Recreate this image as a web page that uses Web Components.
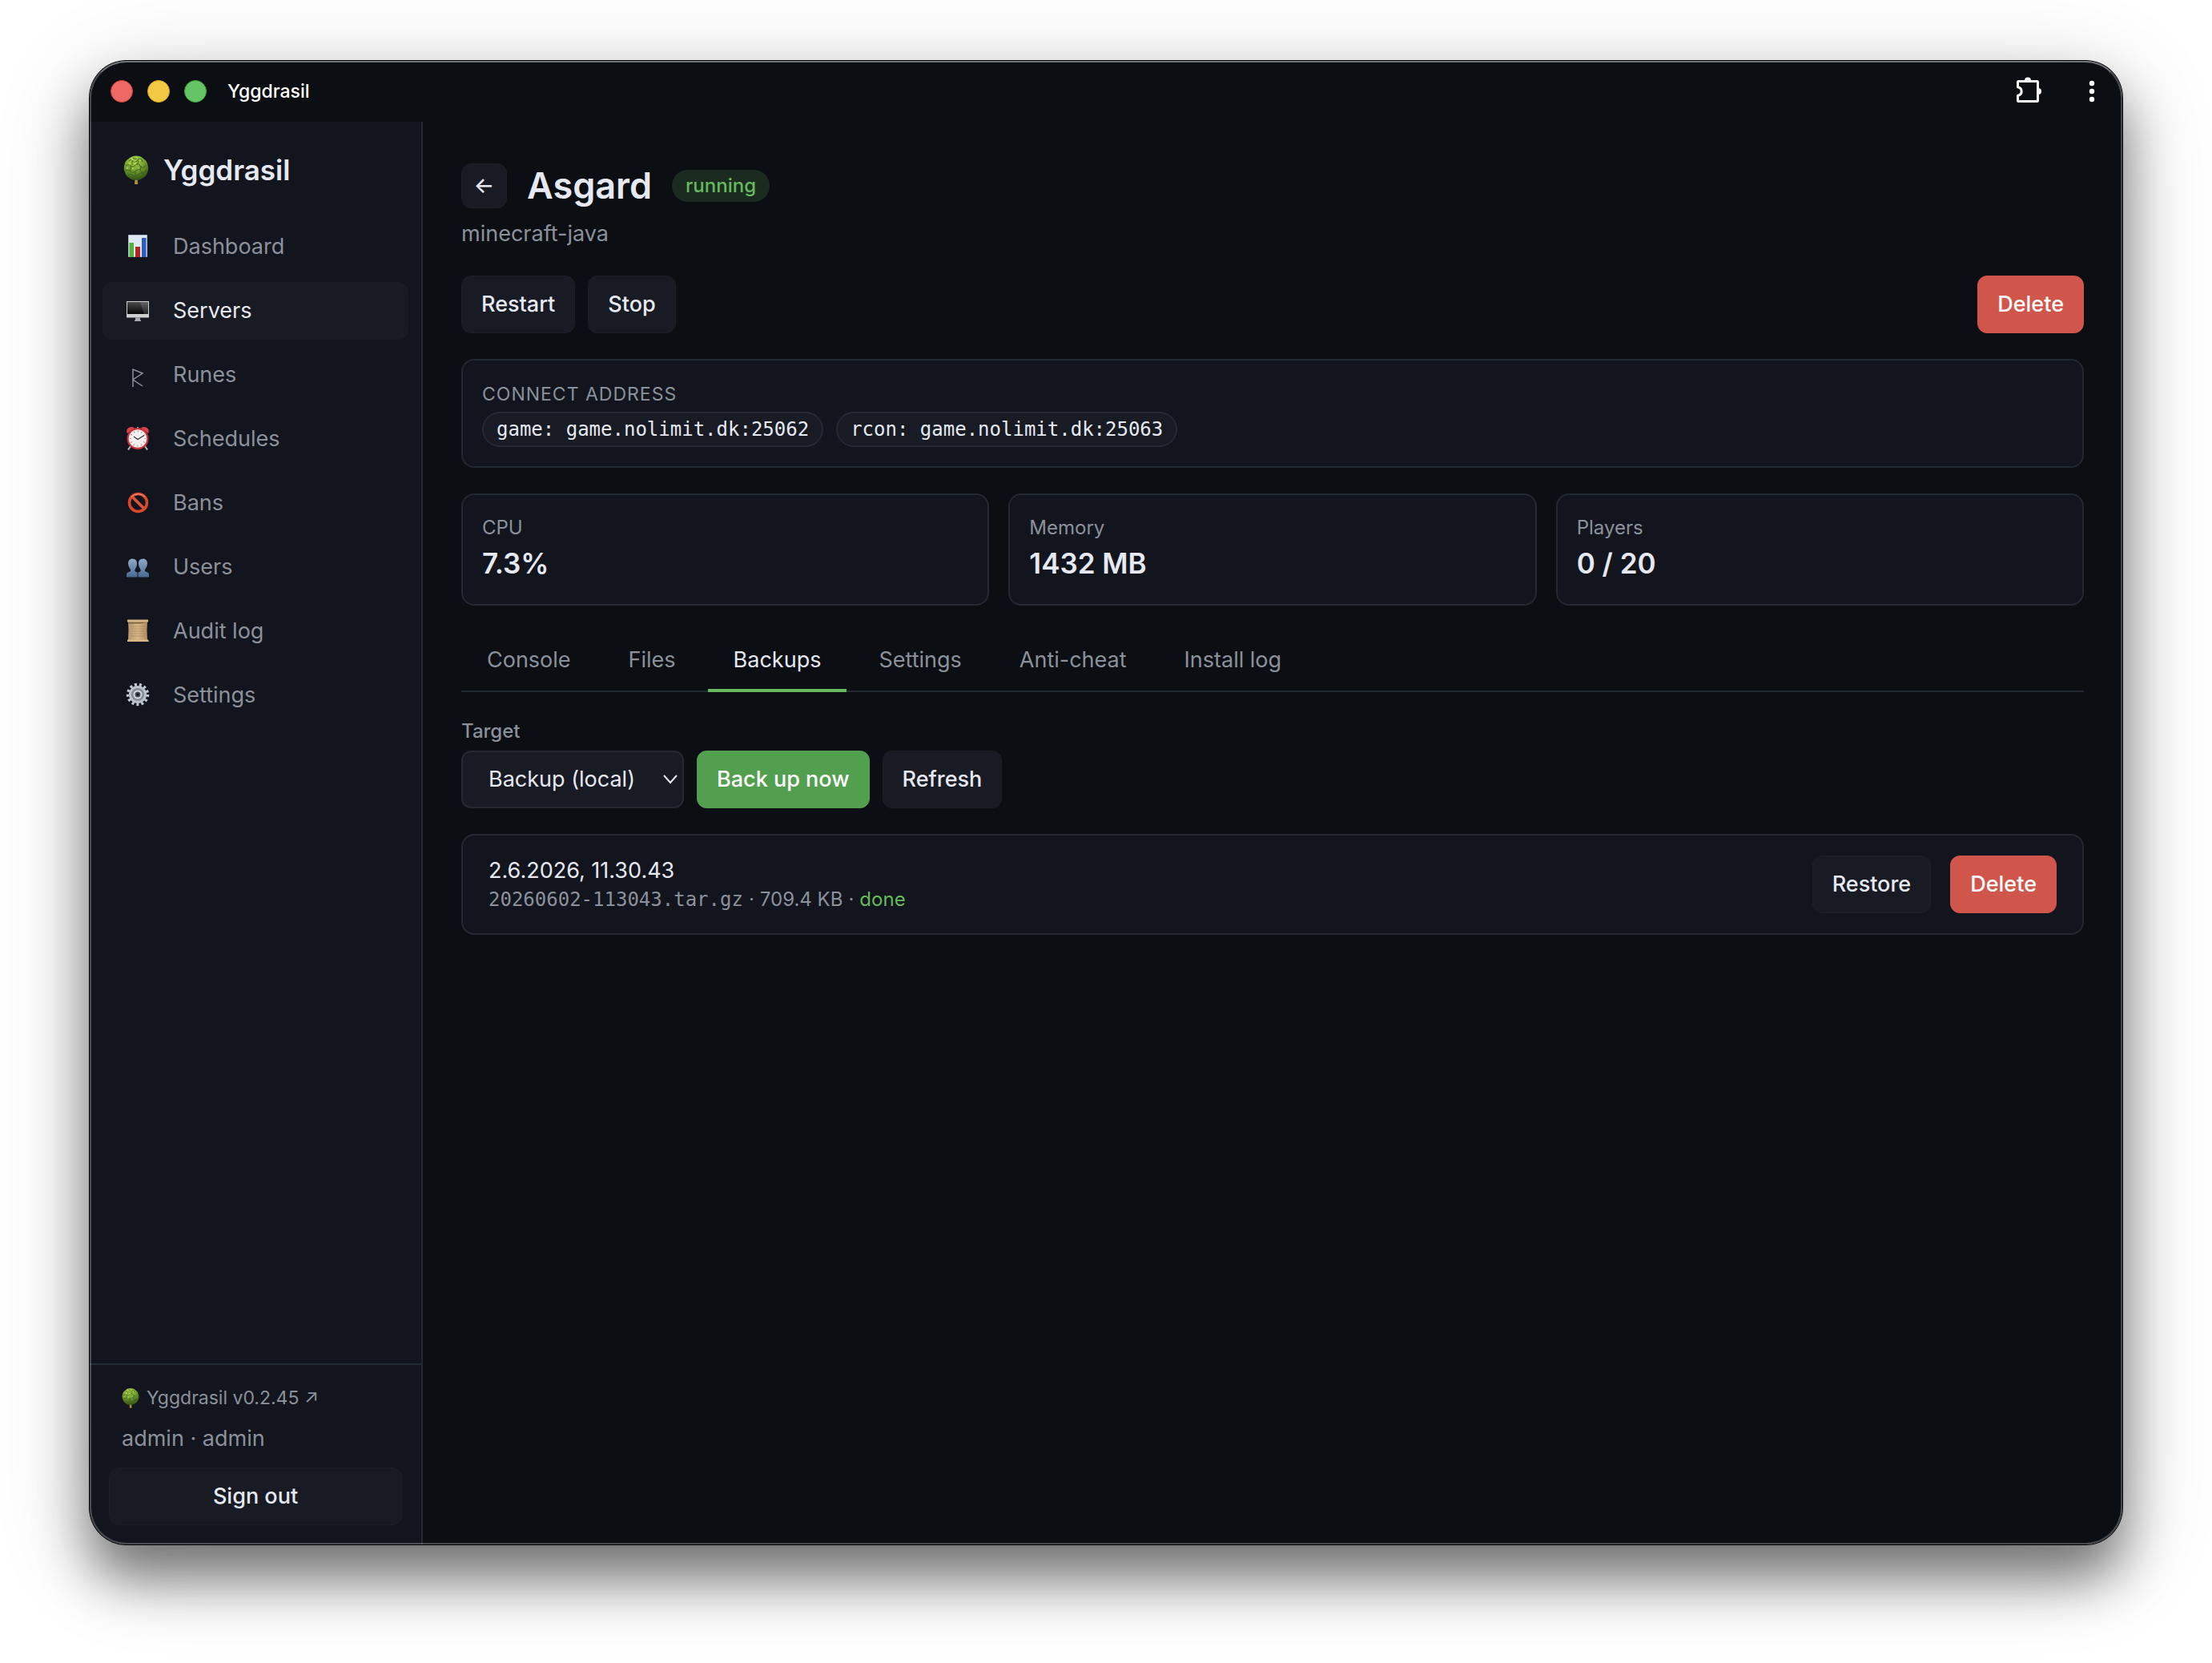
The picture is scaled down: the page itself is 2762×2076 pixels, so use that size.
<!DOCTYPE html>
<html lang="en">
<head>
<meta charset="utf-8">
<title>Yggdrasil</title>
<style>
:root{
  --bg:#0b0e13; --surface:#12151d; --raised:#181b23; --line:#232932;
  --text:#e6e9f2; --muted:#8b919b; --green:#66b95c; --green-fill:#539f50; --red:#d0564b;
  --body:27px; --small:24px; --caption:23px;
}
html,body{height:100%}
body{margin:0;background:#fff;color:var(--text);font-family:Inter,"Liberation Sans",sans-serif;font-size:var(--body);line-height:36px}
</style>
</head>
<body>
<app-window></app-window>
<script>
const define = (name, html) => customElements.define(name, class extends HTMLElement {
  constructor(){
    super();
    const t = document.createElement('template');
    t.innerHTML = '<style>*{box-sizing:border-box}:host{box-sizing:border-box}</style>' + (typeof html === 'function' ? html(this) : html);
    this.attachShadow({mode:'open'}).append(t.content);
  }
});

const icons = {
  tree:'<defs><radialGradient id="g" cx=".42" cy=".2" r=".85"><stop offset="0" stop-color="#a9d24a"/><stop offset=".5" stop-color="#729f30"/><stop offset="1" stop-color="#294711"/></radialGradient></defs><path d="M14.500 26h3.200l.5 8h-4.200z" fill="#b08c42"/><path d="M16-1.500c4 0 7 1 9 3.500 3 1.500 5 4.500 5.500 8 1.200 3 1 6.500-.5 9-.5 3.500-3 6-6 7.500-2 1.800-4.500 2.500-6.500 2.300h-3c-3 .2-5.500-.8-7-2.800-3-1.500-5-4-5.500-7C.5 16 .3 12.500 1.500 9.500 2 6 4 3.500 7 2c2-2.300 5-3.500 9-3.500z" fill="url(#g)"/><g fill="none" stroke="#38591a" stroke-width="1.100" opacity=".75"><path d="M7 5q3-3 5 0t6-1 6 2M3 11q3-3 6 0t6-1 6 1 7-1M3 17q4-2 6 1t7-1 6 1 7-1M6 23q3-3 6 0t7-1 6 0M12 1q3 3 6 0M11 5v5M19 5l-2 5M22 11l-1 6M9 12v5M15 17v6M24 18v4"/></g><g fill="#c4e663" opacity=".65"><circle cx="11" cy="2.500" r="1.400"/><circle cx="17" cy="1" r="1.200"/><circle cx="8" cy="8" r="1.500"/><circle cx="15" cy="8" r="1.400"/><circle cx="21" cy="4" r="1.200"/><circle cx="5" cy="14" r="1.200"/><circle cx="12" cy="14" r="1.200"/><circle cx="19" cy="14" r="1"/></g>',
  chart:'<path d="M4.500 1.500h23v27h-23z" fill="#dfe7f2" stroke="#aebccd"/><path d="M5.500 11H11v18H5.500z" fill="#4fb43a"/><path d="M13 16h6v13h-6z" fill="#b32520"/><path d="M21 5h5.500v24H21z" fill="#2a5cc4"/>',
  monitor:'<defs><linearGradient id="m" x1="0" y1="0" x2="0" y2="1"><stop offset="0" stop-color="#4b4b4b"/><stop offset="1" stop-color="#050505"/></linearGradient></defs><path d="M2 4h28v20.500H2z" fill="#cfcfd2"/><path d="M3 5h26v15H3z" fill="url(#m)"/><path d="M19 5h10v15h-5z" fill="#fff" opacity=".13"/><path d="M13 24.500h6v3h1v1.500h-8v-1.500h1z" fill="#a9a9ad"/>',
  rune:'<path d="M10 31V9l12 5-12 8 12 8" fill="none" stroke="#8b919b" stroke-width="1.500"/>',
  clock:'<path d="M7 25l-3 4.500M25 25l3 4.500" stroke="#b8b8b8" stroke-width="2"/><path d="M16 1v4" stroke="#999" stroke-width="2"/><path d="M3 9C0 4 6-1 12 2zM29 9c3-5-3-10-9-7z" fill="#d9444a"/><circle cx="16" cy="15.500" r="13.500" fill="#c9333a"/><circle cx="16" cy="15.500" r="11.300" fill="#f3f1f0"/><circle cx="16" cy="15.500" r="9" fill="none" stroke="#d98886" stroke-width="2.400" stroke-dasharray="1 3.712" stroke-dashoffset=".5"/><path d="M11 13l5 3.500 8-5" fill="none" stroke="#333" stroke-width="1.300"/>',
  ban:'<path d="M9 8l15 15" stroke="#d8553a" stroke-width="3.800"/><circle cx="16.500" cy="15.500" r="11" fill="none" stroke="#d8482a" stroke-width="3.600"/><path d="M8 8.500a11.500 11.500 0 0 1 17 0" fill="none" stroke="#f59a80" stroke-width="1"/>',
  users:'<defs><linearGradient id="u" x1="0" y1="0" x2="0" y2="1"><stop offset="0" stop-color="#8fabc9"/><stop offset="1" stop-color="#49688f"/></linearGradient></defs><g fill="url(#u)"><path d="M9.500 5.500c4 0 6 3 5.500 7-.3 3-1.500 5-2.500 6.500-.5 2 0 3 3 3.500v6H2v-3c0-2 1-3 3-3.500 2-.5 2.500-1 2-3C5.500 17 4.300 14.500 4 12 3.800 8 6 5.500 9.500 5.500z"/><path d="M22.500 5.500c-4 0-6 3-5.500 7 .3 3 1.500 5 2.500 6.500.5 2 0 3-3 3.500v6H30v-3c0-2-1-3-3-3.500-2-.5-2.500-1-2-3 1.500-2 2.700-4.500 3-7C28.200 8 26 5.500 22.500 5.500z"/></g>',
  scroll:'<defs><linearGradient id="s"><stop offset="0" stop-color="#b99569"/><stop offset=".5" stop-color="#d8b98a"/><stop offset="1" stop-color="#b08a5c"/></linearGradient></defs><path d="M4 3h24q-1 11 0 24H4q1-12 0-24z" fill="url(#s)"/><path d="M3 1.500h26v3H3z" fill="#d7b585"/><path d="M4 4.800h24l-9 1.700H5z" fill="#7d603c"/><path d="M3 26.500h26l1 2.500H3z" fill="#d7b585"/><path d="M7 10h18M7 13h18M7 16h18M7 19h18M7 22h18" stroke="#a98660" stroke-width=".7"/>',
  gear:'<circle cx="16" cy="15" r="12.400" fill="none" stroke="#c3c9d2" stroke-width="3.600" stroke-dasharray="2.997 2.997"/><circle cx="16" cy="15" r="9.600" fill="#858b95" stroke="#bcc2cb" stroke-width="3"/><circle cx="16" cy="15" r="4.500" fill="#4b5059" stroke="#d4d9e0" stroke-width="2"/><circle cx="16" cy="15" r="1.800" fill="#181b23"/>'
};
define('ygg-icon', el => `<style>:host{display:inline-flex;flex:none;width:32px}svg{width:100%;aspect-ratio:1;overflow:visible}</style><svg viewBox="0 0 32 32" aria-hidden="true">${icons[el.getAttribute('name')]}</svg>`);

define('ygg-button', el => `<style>
:host{display:block}
button{display:flex;align-items:center;justify-content:center;width:100%;height:72px;margin:0;padding:0 24px;border:1px solid var(--edge,#1b1f26);border-radius:12px;background:var(--fill,var(--raised));color:var(--ink,var(--text));font:500 27px/36px Inter,sans-serif;white-space:nowrap}
:host([kind=danger]){--fill:var(--red);--edge:var(--red);--ink:#fff}
:host([kind=primary]){--fill:var(--green-fill);--edge:var(--green-fill);--ink:#fff}
:host([kind=icon]) button{width:57px;height:56px;padding:0}
</style><button type="button"${el.getAttribute('label') ? ` aria-label="${el.getAttribute('label')}"` : ''}><slot></slot></button>`);

define('nav-item', el => `<style>
:host{display:block}
a{display:flex;align-items:center;gap:28px;height:72px;padding:0 28px;border-radius:12px;color:var(--muted);text-decoration:none}
:host([active]) a{background:var(--raised);color:var(--text)}
</style><a href="#"><ygg-icon name="${el.getAttribute('icon')}"></ygg-icon><slot></slot></a>`);

define('title-bar', `<style>
:host{display:flex;align-items:center;height:76px;padding:0 24px 0 26px;flex:none;color:#fff}
.lights{display:flex;gap:18px;margin-right:26px}
i{width:28px;height:28px;border-radius:50%;background:#ee6866;border:1px solid #d9403f}
i:nth-child(2){background:#f2c944;border-color:#dfa91c}
i:nth-child(3){background:#65c466;border-color:#35a93a}
span{flex:1;font-size:var(--caption);font-weight:500}
button{display:flex;justify-content:center;width:28px;padding:0;border:0;background:none}
.puzzle{width:36px;margin-right:48px}
</style>
<div class="lights"><i></i><i></i><i></i></div><span>Yggdrasil</span>
<button class="puzzle" type="button" aria-label="Extensions"><svg width="36" height="36" viewBox="0 0 36 36"><path d="M5.500 30.500V23.300c6.200-1 6.200-9.600 0-10.600V6.500q0-1 1-1H29.500q1 0 1 1V29.500q0 1-1 1H6.500q-1 0-1-1" fill="none" stroke="#fff" stroke-width="3" stroke-linejoin="round"/><path d="M14 4.500a4 4 0 0 1 8 0zM31 14a4 4 0 0 1 0 8z" fill="#fff"/></svg></button>
<button type="button" aria-label="Menu"><svg width="8" height="36" viewBox="0 0 8 36" overflow="visible" fill="#fff"><circle cx="4" cy="8" r="3.200"/><circle cx="4" cy="18" r="3.200"/><circle cx="4" cy="28" r="3.200"/></svg></button>`);

define('side-bar', `<style>
:host{display:flex;flex-direction:column;width:416px;flex:none;background:var(--surface);border-right:2px solid var(--line)}
.brand{display:flex;align-items:center;gap:18px;padding:38px 42px 38px;font-size:35px;font-weight:600;line-height:44px}
nav{display:flex;flex-direction:column;gap:8px;padding:0 16px;flex:1}
footer{border-top:2px solid var(--line);padding:22px 24px 24px;color:var(--muted)}
.ver{display:flex;align-items:center;gap:9px;padding:0 16px;height:38px;color:inherit;text-decoration:none;font-size:var(--caption)}
.ver ygg-icon{width:22px}
p{margin:14px 0 18px;padding:0 16px}
</style>
<div class="brand"><ygg-icon name="tree"></ygg-icon>Yggdrasil</div>
<nav>
<nav-item icon="chart">Dashboard</nav-item><nav-item icon="monitor" active>Servers</nav-item><nav-item icon="rune">Runes</nav-item><nav-item icon="clock">Schedules</nav-item><nav-item icon="ban">Bans</nav-item><nav-item icon="users">Users</nav-item><nav-item icon="scroll">Audit log</nav-item><nav-item icon="gear">Settings</nav-item>
</nav>
<footer><a class="ver" href="#"><ygg-icon name="tree"></ygg-icon><span>Yggdrasil v0.2.45 ↗</span></a><p>admin · admin</p><ygg-button>Sign out</ygg-button></footer>`);

define('page-heading', `<style>
:host{display:block}
.row{display:flex;align-items:center;gap:25px}
h1{margin:0;font-size:45px;font-weight:600;line-height:56px}
.badge{height:40px;padding:0 17px;border-radius:20px;background:#1b2b20;color:var(--green);font-size:var(--small);font-weight:500;line-height:40px}
p{margin:14px 0 0;color:var(--muted)}
</style><div class="row"><ygg-button kind="icon" label="Back">←</ygg-button><h1>Asgard</h1><span class="badge">running</span></div><p>minecraft-java</p>`);

define('ygg-card', `<style>:host{display:block;border:2px solid var(--line);border-radius:16px;background:var(--surface);padding:24px}</style><slot></slot>`);

define('connect-card', `<style>
:host{display:block}
h2{margin:0;color:var(--muted);font-size:var(--caption);font-weight:400;line-height:36px;letter-spacing:1px;text-transform:uppercase}
.pills{display:flex;gap:16px;margin:4px 0 0}
code{height:44px;padding:0 16px;border:2px solid var(--line);border-radius:22px;background:var(--raised);font:24px/40px "DejaVu Sans Mono",monospace}
</style><ygg-card><h2>Connect address</h2><div class="pills"><code>game: game.nolimit.dk:25062</code><code>rcon: game.nolimit.dk:25063</code></div></ygg-card>`);

define('stat-card', el => `<style>
:host{display:block;flex:1}
span{display:block;color:var(--muted);font-size:var(--small);line-height:34px}
strong{display:block;font-size:35px;font-weight:600;line-height:54px}
</style><ygg-card><span>${el.getAttribute('label')}</span><strong><slot></slot></strong></ygg-card>`);

define('ygg-tabs', `<style>
:host{display:block}
nav{display:flex;gap:8px;border-bottom:2px solid var(--line)}
a{padding:18px 32px;margin-bottom:-2px;border-bottom:4px solid transparent;color:var(--muted);text-decoration:none}
a[aria-current]{color:var(--text);border-color:var(--green)}
</style><nav><a href="#">Console</a><a href="#">Files</a><a href="#" aria-current="page">Backups</a><a href="#">Settings</a><a href="#">Anti-cheat</a><a href="#">Install log</a></nav>`);

define('backup-bar', `<style>
:host{display:flex;align-items:flex-end;gap:16px}
.field{display:flex;flex-direction:column;gap:6px}
label{color:var(--muted);font-size:var(--small);font-weight:500;line-height:36px}
.box{display:grid;align-items:center}
select{grid-area:1/1;appearance:none;height:72px;width:278px;margin:0;padding:0 32px;border:2px solid var(--line);border-radius:12px;background:var(--raised);color:var(--text);font:27px/36px Inter,sans-serif}
svg{grid-area:1/1;justify-self:end;margin-right:8px;pointer-events:none}
</style><div class="field"><label for="target">Target</label><div class="box"><select id="target"><option>Backup (local)</option></select><svg width="18" height="12" viewBox="0 0 18 12" fill="none" stroke="#e6e9f2" stroke-width="2"><path d="M1 1l8 9 8-9"/></svg></div></div><ygg-button kind="primary">Back up now</ygg-button><ygg-button>Refresh</ygg-button>`);

define('backup-row', `<style>
:host{display:block}
.row{display:flex;align-items:center;gap:24px;padding:1px 8px}
.info{flex:1}
.date{line-height:38px}
.meta{display:flex;gap:7px;color:var(--muted);font-size:var(--small);line-height:34px}
code{font:24px/34px "DejaVu Sans Mono",monospace}
.ok{color:var(--green)}
</style><ygg-card><div class="row"><div class="info"><div class="date">2.6.2026, 11.30.43</div><div class="meta"><code>20260602-113043.tar.gz</code><span>·</span><span>709.4 KB</span><span>·</span><span class="ok">done</span></div></div><ygg-button>Restore</ygg-button><ygg-button kind="danger">Delete</ygg-button></div></ygg-card>`);

define('server-page', `<style>
:host{display:flex;flex-direction:column;flex:1;padding:52px 48px}
.actions{display:flex;gap:16px;margin:34px 0 32px}
.actions :last-child{margin-left:auto}
.stats{display:flex;gap:24px;margin:32px 0}
backup-bar{margin:31px 0 32px}
</style>
<page-heading></page-heading>
<div class="actions"><ygg-button>Restart</ygg-button><ygg-button>Stop</ygg-button><ygg-button kind="danger">Delete</ygg-button></div>
<connect-card></connect-card>
<div class="stats"><stat-card label="CPU">7.3%</stat-card><stat-card label="Memory">1432 MB</stat-card><stat-card label="Players">0 / 20</stat-card></div>
<ygg-tabs></ygg-tabs>
<backup-bar></backup-bar>
<backup-row></backup-row>`);

define('app-window', `<style>
:host{display:flex;height:100%;padding:76px 112px 148px}
.win{position:relative;display:flex;flex-direction:column;flex:1;border-radius:46px;background:var(--bg);overflow:hidden}
.frame{display:flex;flex:1;border-radius:46px;box-shadow:0 0 0 1px #000,0 42px 66px rgba(0,0,0,.48),0 24px 120px rgba(0,0,0,.2)}
.win::after{content:"";position:absolute;inset:0;border:2px solid rgba(255,255,255,.24);border-top-color:rgba(255,255,255,.42);border-radius:46px;pointer-events:none}
.body{display:flex;flex:1}
</style><div class="frame"><div class="win"><title-bar></title-bar><div class="body"><side-bar></side-bar><server-page></server-page></div></div></div>`);
</script>
</body>
</html>
